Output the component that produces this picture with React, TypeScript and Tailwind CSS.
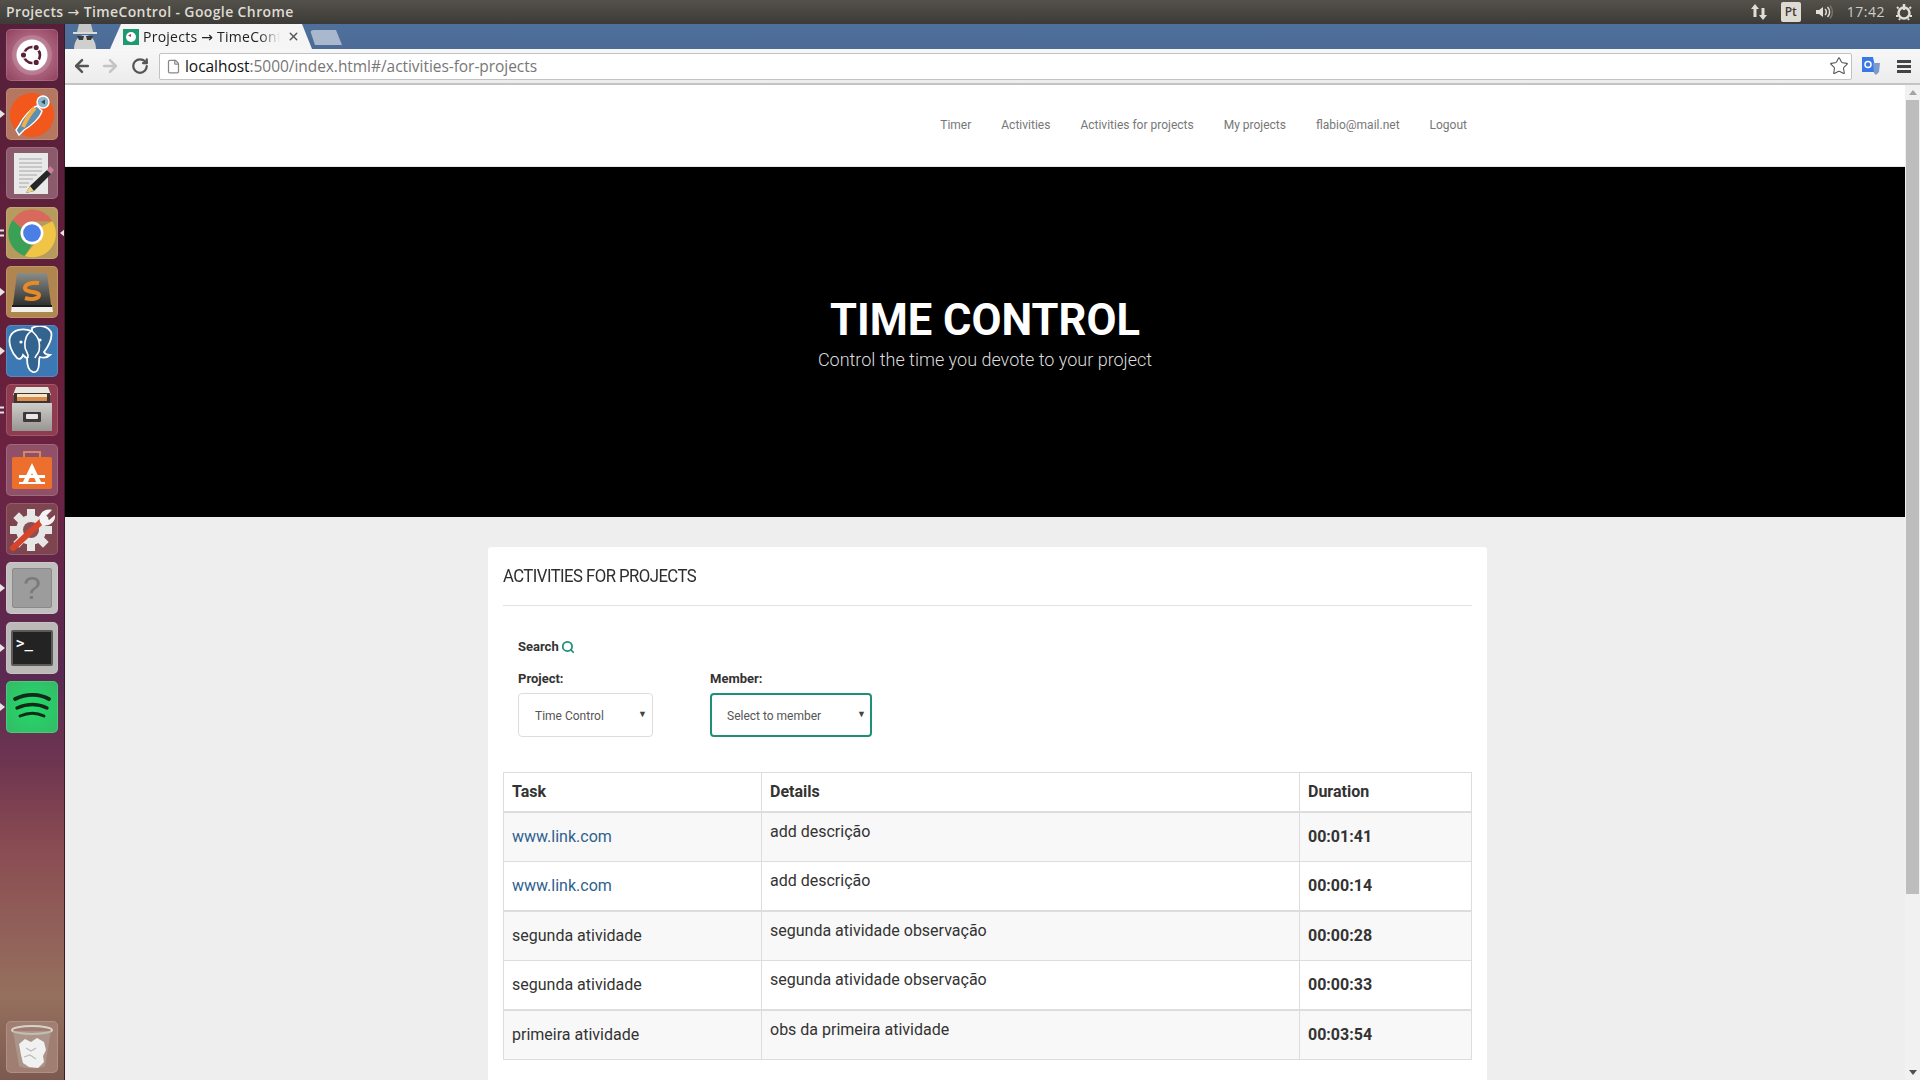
import { ArrowLeft, ArrowRight, RotateCw, Star, File, Search, X } from "lucide-react";

const navLinks = ["Timer", "Activities", "Activities for projects", "My projects", "flabio@mail.net", "Logout"];

const rows = [
  { task: "www.link.com", link: true, details: "add descrição", time: "00:01:41", h: "h-[50px]", odd: true },
  { task: "www.link.com", link: true, details: "add descrição", time: "00:00:14", h: "h-[49px]", odd: false, thick: true },
  { task: "segunda atividade", details: "segunda atividade observação", time: "00:00:28", h: "h-[50px]", odd: true },
  { task: "segunda atividade", details: "segunda atividade observação", time: "00:00:33", h: "h-[49px]", odd: false, thick: true },
  { task: "primeira atividade", details: "obs da primeira atividade", time: "00:03:54", h: "h-[50px]", odd: true },
];

function Tile({ className, children, pip, pips, active }: { className: string; children: React.ReactNode; pip?: boolean; pips?: boolean; active?: boolean }) {
  return (
    <div className="relative flex h-[59.3px] w-[65px] shrink-0 items-center justify-center">
      {pip && <span className="absolute left-0 top-1/2 h-0 w-0 -translate-y-1/2 border-y-[4px] border-l-[5px] border-y-transparent border-l-[#e8e4e4]" />}
      {pips && <span className="absolute left-0 top-1/2 h-[7px] w-[4px] -translate-y-1/2 border-y-2 border-[#e8e4e4]" />}
      {active && <span className="absolute right-0 top-1/2 h-0 w-0 -translate-y-1/2 border-y-[4px] border-r-[5px] border-y-transparent border-r-[#e8e4e4]" />}
      <div className={`ml-[-1px] flex h-[52px] w-[52px] items-center justify-center overflow-hidden rounded-[5px] shadow-[inset_0_0_0_1px_rgba(255,255,255,0.14)] ${className}`}>{children}</div>
    </div>
  );
}

function UbuntuIcon() {
  return (
    <svg width="44" height="44" viewBox="0 0 44 44">
      <circle cx="22" cy="22" r="20" fill="#fff" opacity="0.16" />
      <circle cx="22" cy="22" r="15.500" fill="#fff" />
      <circle cx="22" cy="22" r="8" fill="none" stroke="#5a2038" strokeWidth="2.600" />
      <g fill="#5a2038" stroke="#fff" strokeWidth="1.300">
        <circle cx="13.500" cy="22" r="3.200" />
        <circle cx="26.200" cy="14.600" r="3.200" />
        <circle cx="26.200" cy="29.400" r="3.200" />
      </g>
    </svg>
  );
}

function PostmanIcon() {
  return (
    <svg width="50" height="50" viewBox="0 0 50 50">
      <circle cx="25" cy="26" r="22" fill="#f2571c" />
      <path d="M30 17C24 19 15 30 13 35L9 41 12 46 17 41C24 37 33 29 35 22Z" fill="#5f8fb0" stroke="#fff" strokeWidth="1.400" />
      <path d="M28 19C24 23 19 31 16 38" fill="none" stroke="#efb04a" strokeWidth="4" />
      <circle cx="36" cy="13" r="6" fill="#8db4c9" stroke="#fff" strokeWidth="1.400" />
      <path d="M38 10.500 L34 13 L38 15.500Z" fill="#2e4a60" />
    </svg>
  );
}

function TextEditorIcon() {
  return (
    <svg width="46" height="46" viewBox="0 0 46 46">
      <rect x="5" y="3" width="34" height="41" fill="#e9e9e9" />
      <g stroke="#a5a5a5" strokeWidth="1">
        <path d="M10 9H33M10 13H33M10 17H33M10 21H33M10 25H28M10 29H24M10 33H20M10 37H18" />
      </g>
      <path d="M21 36 L38 20 L42 24 L25 41 L17 43Z" fill="#262626" />
      <path d="M38 20 L41 16 L45 20 L42 24Z" fill="#c9809a" />
      <path d="M21 36 L17 43 L25 41Z" fill="#e8d48a" />
    </svg>
  );
}

function ChromeIcon() {
  return (
    <svg width="50" height="50" viewBox="0 0 48 48">
      <path d="M24 1.500a22.500 22.500 0 0 1 19.500 11.250H24a11 11 0 0 0-10.100 6.500L5.400 11.500A22.500 22.500 0 0 1 24 1.500z" fill="#d9695c" />
      <path d="M5.400 11.500 13.900 19.300a11 11 0 0 0 10.100 15.700L17 46A22.500 22.500 0 0 1 5.400 11.500z" fill="#3aa055" />
      <path d="M43.500 12.750A22.500 22.500 0 0 1 17 46l9-11a11 11 0 0 0 6.700-17z" fill="#f0c444" />
      <circle cx="24" cy="24" r="11" fill="#fff" />
      <circle cx="24" cy="24" r="8.500" fill="#4a80e6" />
    </svg>
  );
}

function SublimeIcon() {
  return (
    <svg width="48" height="48" viewBox="0 0 48 48">
      <defs>
        <linearGradient id="subl" x1="0" y1="0" x2="0" y2="1">
          <stop offset="0" stopColor="#8a8c88" />
          <stop offset="1" stopColor="#2f3231" />
        </linearGradient>
      </defs>
      <path d="M9 5H39L43 37H5Z" fill="url(#subl)" />
      <path d="M4 37H44L45 44H3Z" fill="#f1f0ea" />
      <path d="M4 37H44V39H4Z" fill="#1c1d1c" />
      <path d="M31 15C24 14 17 16 17 20C17 25 31 23 31 27C31 31 23 32 17 30" fill="none" stroke="#e88a26" strokeWidth="4" />
    </svg>
  );
}

function PostgresIcon() {
  return (
    <svg width="50" height="50" viewBox="0 0 50 50">
      <path d="M25 5C16 2 6 3 3 11c-2 7 2 16 7 21 3 2 5 0 6-3 2 2 3 3 4 3 0 6 1 13 6 14 4 1 6-3 6-9 0-3 0-5 1-6 3 1 7 1 10-2-3 0-5-1-6-3 4-5 9-14 7-20-3-6-12-8-19-4z" fill="#33648f" stroke="#fff" strokeWidth="1.800" />
      <path d="M25 5c-5 2-8 9-7 16 0 4 4 6 3 11M25 5c4 4 9 8 7 20-1 3-3 4-4 7" fill="none" stroke="#fff" strokeWidth="1.600" />
      <circle cx="14" cy="16" r="1.600" fill="#fff" />
      <circle cx="33" cy="14" r="1.600" fill="#fff" />
    </svg>
  );
}

function FilesIcon() {
  return (
    <svg width="46" height="48" viewBox="0 0 46 48">
      <defs>
        <linearGradient id="cab" x1="0" y1="0" x2="0" y2="1">
          <stop offset="0" stopColor="#cfcdc9" />
          <stop offset="1" stopColor="#989693" />
        </linearGradient>
      </defs>
      <path d="M7 1H39L42 9H4Z" fill="#e9e6e0" />
      <rect x="5" y="7" width="36" height="11" fill="#3d3532" />
      <rect x="8" y="8" width="30" height="3" fill="#f5e6c8" />
      <rect x="8" y="11" width="30" height="4" fill="#d88c50" />
      <rect x="3" y="17" width="40" height="28" fill="url(#cab)" />
      <rect x="14" y="26" width="18" height="10" rx="1" fill="#3e3a3a" />
      <rect x="17" y="28" width="12" height="5" rx="1" fill="#e8e8e8" />
    </svg>
  );
}

function StoreIcon() {
  return (
    <svg width="46" height="46" viewBox="0 0 46 46">
      <path d="M15 11V5H31V11" fill="none" stroke="#d28a66" strokeWidth="2" />
      <rect x="3" y="10" width="40" height="32" rx="2" fill="#ec6f2d" />
      <path d="M23 16 L13 37H18L23 26L28 37H33Z" fill="#fff" />
      <rect x="10" y="28" width="26" height="3" fill="#fff" />
      <rect x="10" y="35" width="26" height="2" fill="#fff" />
    </svg>
  );
}

function SettingsIcon() {
  return (
    <svg width="50" height="50" viewBox="0 0 50 50">
      <g transform="translate(24 26)" fill="#e6e6e6">
        <circle r="15" />
        <rect x="-4" y="-21" width="8" height="42" />
        <rect x="-4" y="-21" width="8" height="42" transform="rotate(45)" />
        <rect x="-4" y="-21" width="8" height="42" transform="rotate(90)" />
        <rect x="-4" y="-21" width="8" height="42" transform="rotate(135)" />
        <circle r="8" fill="#8a4f55" />
      </g>
      <path d="M6 44 L36 16" stroke="#d6452b" strokeWidth="6" strokeLinecap="round" />
      <path d="M33 18 C31 10 37 4 45 6 L39 12 L42 16 L48 11 C49 18 42 23 35 21Z" fill="#f3f3f3" />
    </svg>
  );
}

function HelpIcon() {
  return (
    <div className="flex h-[40px] w-[40px] items-center justify-center rounded-[2px] border border-[#8a8a8a] bg-[#9c9c9c] font-['Liberation_Sans',sans-serif] text-[32px] leading-none text-[#7a7a7a]">
      ?
    </div>
  );
}

function TerminalIcon() {
  return (
    <div className="flex h-[36px] w-[42px] items-start rounded-[2px] border-2 border-[#5a5a5a] bg-[#232323] px-[3px] pt-[3px] font-['DejaVu_Sans_Mono',monospace] text-[14px] font-bold leading-[16px] text-white">
      &gt;_
    </div>
  );
}

function SpotifyIcon() {
  return (
    <svg width="40" height="34" viewBox="0 0 40 34" fill="none" stroke="#14281c" strokeLinecap="round">
      <path d="M3 9C15 3 28 4 37 9" strokeWidth="3.800" />
      <path d="M5 18C16 13 27 14 35 18" strokeWidth="3.400" />
      <path d="M8 26C17 22 26 23 32 26" strokeWidth="3" />
    </svg>
  );
}

function TrashIcon() {
  return (
    <svg width="44" height="46" viewBox="0 0 44 46">
      <ellipse cx="22" cy="6" rx="20" ry="4" fill="none" stroke="#d8d2cc" strokeWidth="2" />
      <path d="M3 7L9 42C13 45 31 45 35 42L41 7Z" fill="#b5a79f" opacity="0.55" />
      <path d="M9 20l6-5 6 3 6-4 7 4 2 8-3 6 1 6-6 6-9-1-6-4-2-8z" fill="#f1f1f1" />
      <path d="M16 24l5 3 5-3M14 33l6-2 6 4" fill="none" stroke="#bcbcbc" strokeWidth="1.200" />
    </svg>
  );
}

function Launcher() {
  return (
    <aside className="relative flex w-[65px] shrink-0 flex-col overflow-hidden border-r border-[#3a1a28] bg-[linear-gradient(180deg,#56203a_0%,#641f3a_30%,#6c2342_42%,#5a2a52_62%,#6e3550_70%,#8a4c52_78%,#96705e_92%,#7c5a50_100%)] pt-[1px]">
      <Tile className="bg-[radial-gradient(circle,#c98aa0,#8f3f5c)]"><UbuntuIcon /></Tile>
      <Tile pip className="bg-[#b5775f]"><PostmanIcon /></Tile>
      <Tile className="bg-[#8b5a6b]"><TextEditorIcon /></Tile>
      <Tile pips active className="bg-[#b79a5e]"><ChromeIcon /></Tile>
      <Tile pip className="bg-[#b1854f]"><SublimeIcon /></Tile>
      <Tile pip className="bg-[#3c78b4]"><PostgresIcon /></Tile>
      <Tile pips className="bg-[#8f3c50]"><FilesIcon /></Tile>
      <Tile className="bg-[#8f5068]"><StoreIcon /></Tile>
      <Tile className="bg-[#7e4450]"><SettingsIcon /></Tile>
      <Tile pip className="bg-[#c2bfbf]"><HelpIcon /></Tile>
      <Tile pip className="bg-[#bcb9b9]"><TerminalIcon /></Tile>
      <Tile pip className="bg-[radial-gradient(circle,#22dc66,#35b868)]"><SpotifyIcon /></Tile>
      <div className="mt-auto mb-[3px]">
        <Tile className="bg-[#a07f72]"><TrashIcon /></Tile>
      </div>
    </aside>
  );
}

function TopBar() {
  return (
    <header className="flex h-6 shrink-0 items-center justify-between bg-[linear-gradient(180deg,#53514a,#3c3b37)] pb-[1px] pl-[6px] pr-[7px] font-['Open_Sans',sans-serif] text-[14px] font-semibold tracking-[0.38px] text-[#dfdbd2]">
      <span>
        Projects <span className="font-['DejaVu_Sans',sans-serif] font-normal">→</span> TimeControl - Google Chrome
      </span>
      <div className="flex items-center">
        <svg width="18" height="18" viewBox="0 0 18 18" fill="#e2ded6" className="mr-[13px]">
          <path d="M5 1l4 5H6.500v8h-3V6H1zM13 17l-4-5h2.500V5h3v7H17z" />
        </svg>
        <span className="mr-[13px] flex h-[20px] w-[20px] items-center justify-center rounded-[2px] bg-[#dfdbd2] text-[12px] tracking-normal text-[#3c3b37]">Pt</span>
        <svg width="20" height="18" viewBox="0 0 20 18" fill="none" className="mr-[13px]">
          <path d="M2 7h3l4-3v10l-4-3H2z" fill="#e2ded6" />
          <path d="M11 6a4 4 0 0 1 0 6M13.500 4a7 7 0 0 1 0 10" stroke="#e2ded6" strokeWidth="1.500" />
          <path d="M16 2.500a10 10 0 0 1 0 13" stroke="#77746c" strokeWidth="1.500" />
        </svg>
        <span className="mr-[10px] font-normal tracking-[0.5px] text-[#d0ccc3]">17:42</span>
        <svg width="18" height="18" viewBox="0 0 18 18" fill="none" stroke="#e2ded6" strokeWidth="2.500">
          <path d="M9 1v6" />
          <circle cx="9" cy="10" r="5.500" />
          <path d="M2 4l1.500 1.500M16 4l-1.500 1.500M1 13h2M15 13h2M4 17l1-1.500M14 17l-1-1.500" strokeWidth="2" />
        </svg>
      </div>
    </header>
  );
}

function TabStrip() {
  return (
    <div className="flex h-[25px] shrink-0 items-end bg-[linear-gradient(180deg,#4f709c,#4c6c96)] font-['Open_Sans',sans-serif]">
      <svg width="28" height="25" viewBox="0 0 28 25" className="ml-[6px] shrink-0">
        <path d="M8 0h12l2 8H6z" fill="#c6c6c6" />
        <path d="M2 8h24v2H2z" fill="#dadada" />
        <path d="M3 25c0-6 3-14 11-14s11 8 11 14z" fill="#cfcfcf" />
        <path d="M6 12h7l-1 4H8zM15 12h7l-2 4h-4z" fill="#3a3a3a" />
      </svg>
      <div className="ml-[11px] flex h-[25px] w-[202px] items-center bg-[#f5f5f5] pl-[13px] pr-[10px] [clip-path:polygon(11px_0,calc(100%-10px)_0,100%_100%,0_100%)]">
        <svg width="16" height="16" viewBox="0 0 16 16" className="shrink-0">
          <rect width="16" height="16" fill="#1d9a72" />
          <circle cx="8" cy="8" r="5" fill="#fff" />
          <path d="M8 8l-3-1.500 3-1.500z" fill="#b33a5a" />
        </svg>
        <span className="ml-[4px] w-[137px] overflow-hidden whitespace-nowrap text-[14px] tracking-[0.25px] text-[#222] [mask-image:linear-gradient(90deg,#000_85%,transparent)]">
          Projects <span className="font-['DejaVu_Sans',sans-serif]">→</span> TimeControl
        </span>
        <X size={13} strokeWidth={2.500} className="ml-[7px] shrink-0 text-[#555]" />
      </div>
      <div className="mb-[4px] ml-[-2px] h-[15px] w-[32px] rounded-t-[4px] bg-[#a9b8cc] [clip-path:polygon(0_0,calc(100%-6px)_0,100%_100%,5px_100%)]" />
    </div>
  );
}

function Toolbar() {
  return (
    <div className="flex h-[36px] shrink-0 items-center border-b-2 border-[#c4c4c4] bg-[linear-gradient(180deg,#f7f7f7,#ececec)] pl-[6px] pr-[8px]">
      <ArrowLeft size={20} strokeWidth={3} className="ml-[1px] text-[#555]" />
      <ArrowRight size={20} strokeWidth={3} className="ml-[8px] text-[#c4c4c4]" />
      <RotateCw size={18} strokeWidth={3} className="ml-[11px] text-[#555]" />
      <div className="ml-[10px] flex h-[27px] flex-1 items-center rounded-[2px] border border-[#c2c2c2] bg-white pl-[6px] pr-[2px]">
        <File size={15} className="text-[#888]" />
        <span className="ml-[4px] flex-1 pt-[1px] font-['Open_Sans',sans-serif] text-[15.500px] tracking-[-0.05px] text-[#777]">
          <span className="text-[#111]">localhost</span>:5000/index.html#/activities-for-projects
        </span>
        <Star size={20} strokeWidth={1.300} className="text-[#555]" />
      </div>
      <svg width="20" height="20" viewBox="0 0 20 20" className="ml-[9px]">
        <path d="M1 1h11l3 15H1z" fill="#3b78e7" />
        <circle cx="7" cy="8.500" r="3" fill="none" stroke="#fff" strokeWidth="1.500" />
        <path d="M12 7h7l-1 9-3 3-2-2z" fill="#7b9bcc" />
      </svg>
      <div className="ml-[16px] mr-[1px] flex w-[14px] flex-col gap-[2px]">
        <span className="h-[3px] bg-[#444]" />
        <span className="h-[3px] bg-[#444]" />
        <span className="h-[3px] bg-[#444]" />
      </div>
    </div>
  );
}

function FakeSelect({ value, focused, className }: { value: string; focused?: boolean; className: string }) {
  return (
    <div className={`flex h-[44px] items-center justify-between rounded-[4px] bg-white pt-[1px] text-[12px] text-[#555] ${focused ? "border-2 border-[#1f8f78] pl-[15px] pr-[4px]" : "border border-[#ddd] pl-[16px] pr-[5px]"} ${className}`}>
      <span>{value}</span>
      <span className="mb-[2px] text-[9px] text-[#444]">▼</span>
    </div>
  );
}

function ActivitiesCard() {
  return (
    <section className="ml-[423px] mt-[30px] w-[999px] rounded-t-[3px] bg-white px-[15px] pb-[20px]">
      <div className="flex h-[59px] w-[969px] items-center border-b border-[#e3e3e3]">
        <h2 className="mb-[2px] origin-left scale-x-[0.93] whitespace-nowrap text-[18px] font-normal tracking-[-0.6px] text-[#2f2f2f]">ACTIVITIES FOR PROJECTS</h2>
      </div>
      <div className="px-[15px]">
        <div className="mt-[33px] flex h-[16px] items-center text-[13px] font-bold text-[#333]">
          Search
          <Search size={14} strokeWidth={3} className="ml-[2px] text-[#1f8f78]" />
        </div>
        <div className="mt-[16px] flex">
          <div className="mr-[57px]">
            <div className="mb-[7px] text-[13px] font-bold leading-[15px] text-[#333]">Project:</div>
            <FakeSelect value="Time Control" className="w-[135px]" />
          </div>
          <div>
            <div className="mb-[7px] text-[13px] font-bold leading-[15px] text-[#333]">Member:</div>
            <FakeSelect value="Select to member" focused className="w-[162px]" />
          </div>
        </div>
      </div>
      <table className="mt-[35px] w-[968px] table-fixed border-collapse text-[16px] text-[#333]">
        <colgroup>
          <col className="w-[258px]" />
          <col className="w-[538px]" />
          <col className="w-[172px]" />
        </colgroup>
        <thead>
          <tr className="h-[39px] border-b-2 border-[#ddd] text-left font-bold">
            <th className="border border-b-2 border-[#ddd] px-2">Task</th>
            <th className="border border-b-2 border-[#ddd] px-2">Details</th>
            <th className="border border-b-2 border-[#ddd] px-2">Duration</th>
          </tr>
        </thead>
        <tbody>
          {rows.map((r, i) => (
            <tr key={i} className={`${r.h} ${r.odd ? "bg-[#f8f8f8]" : "bg-white"}`}>
              <td className={`border border-[#ddd] px-2 ${r.thick ? "border-b-2" : ""} ${r.link ? "text-[#2f5f8f]" : ""}`}>{r.task}</td>
              <td className={`border border-[#ddd] px-2 pb-[9px] ${r.thick ? "border-b-2" : ""}`}>{r.details}</td>
              <td className={`border border-[#ddd] px-2 font-bold ${r.thick ? "border-b-2" : ""}`}>{r.time}</td>
            </tr>
          ))}
        </tbody>
      </table>
    </section>
  );
}

function Scrollbar() {
  return (
    <div className="flex w-[15px] shrink-0 flex-col items-center bg-[#f1f1f1]">
      <span className="mt-[5px] h-0 w-0 border-x-[4px] border-b-[5px] border-x-transparent border-b-[#a3a3a3]" />
      <div className="mt-[5px] h-[794px] w-[13px] bg-[#bdbdbd]" />
      <span className="mt-auto mb-[5px] h-0 w-0 border-x-[4px] border-t-[5px] border-x-transparent border-t-[#505050]" />
    </div>
  );
}

export default function App() {
  return (
    <div className="flex h-screen w-[1920px] flex-col overflow-hidden font-['Roboto',sans-serif]">
      <TopBar />
      <div className="flex min-h-0 flex-1">
        <Launcher />
        <div className="flex min-w-0 flex-1 flex-col">
          <TabStrip />
          <Toolbar />
          <div className="flex min-h-0 flex-1">
            <main className="min-w-0 flex-1 overflow-hidden bg-[#eeeeee]">
              <nav className="flex h-[82px] items-center justify-end gap-[30px] border-b border-[#e7e7e7] bg-white pb-[1px] pr-[438px] text-[12px] text-[#777]">
                {navLinks.map((l) => (
                  <a key={l}>{l}</a>
                ))}
              </nav>
              <div className="flex h-[350px] flex-col items-center justify-center bg-black pb-[16px] text-white">
                <h1 className="text-[43.500px] font-bold leading-[50px]">TIME CONTROL</h1>
                <p className="pt-[1px] text-[18px] font-light leading-[26px] text-[#ddd]">Control the time you devote to your project</p>
              </div>
              <ActivitiesCard />
            </main>
            <Scrollbar />
          </div>
        </div>
      </div>
    </div>
  );
}
